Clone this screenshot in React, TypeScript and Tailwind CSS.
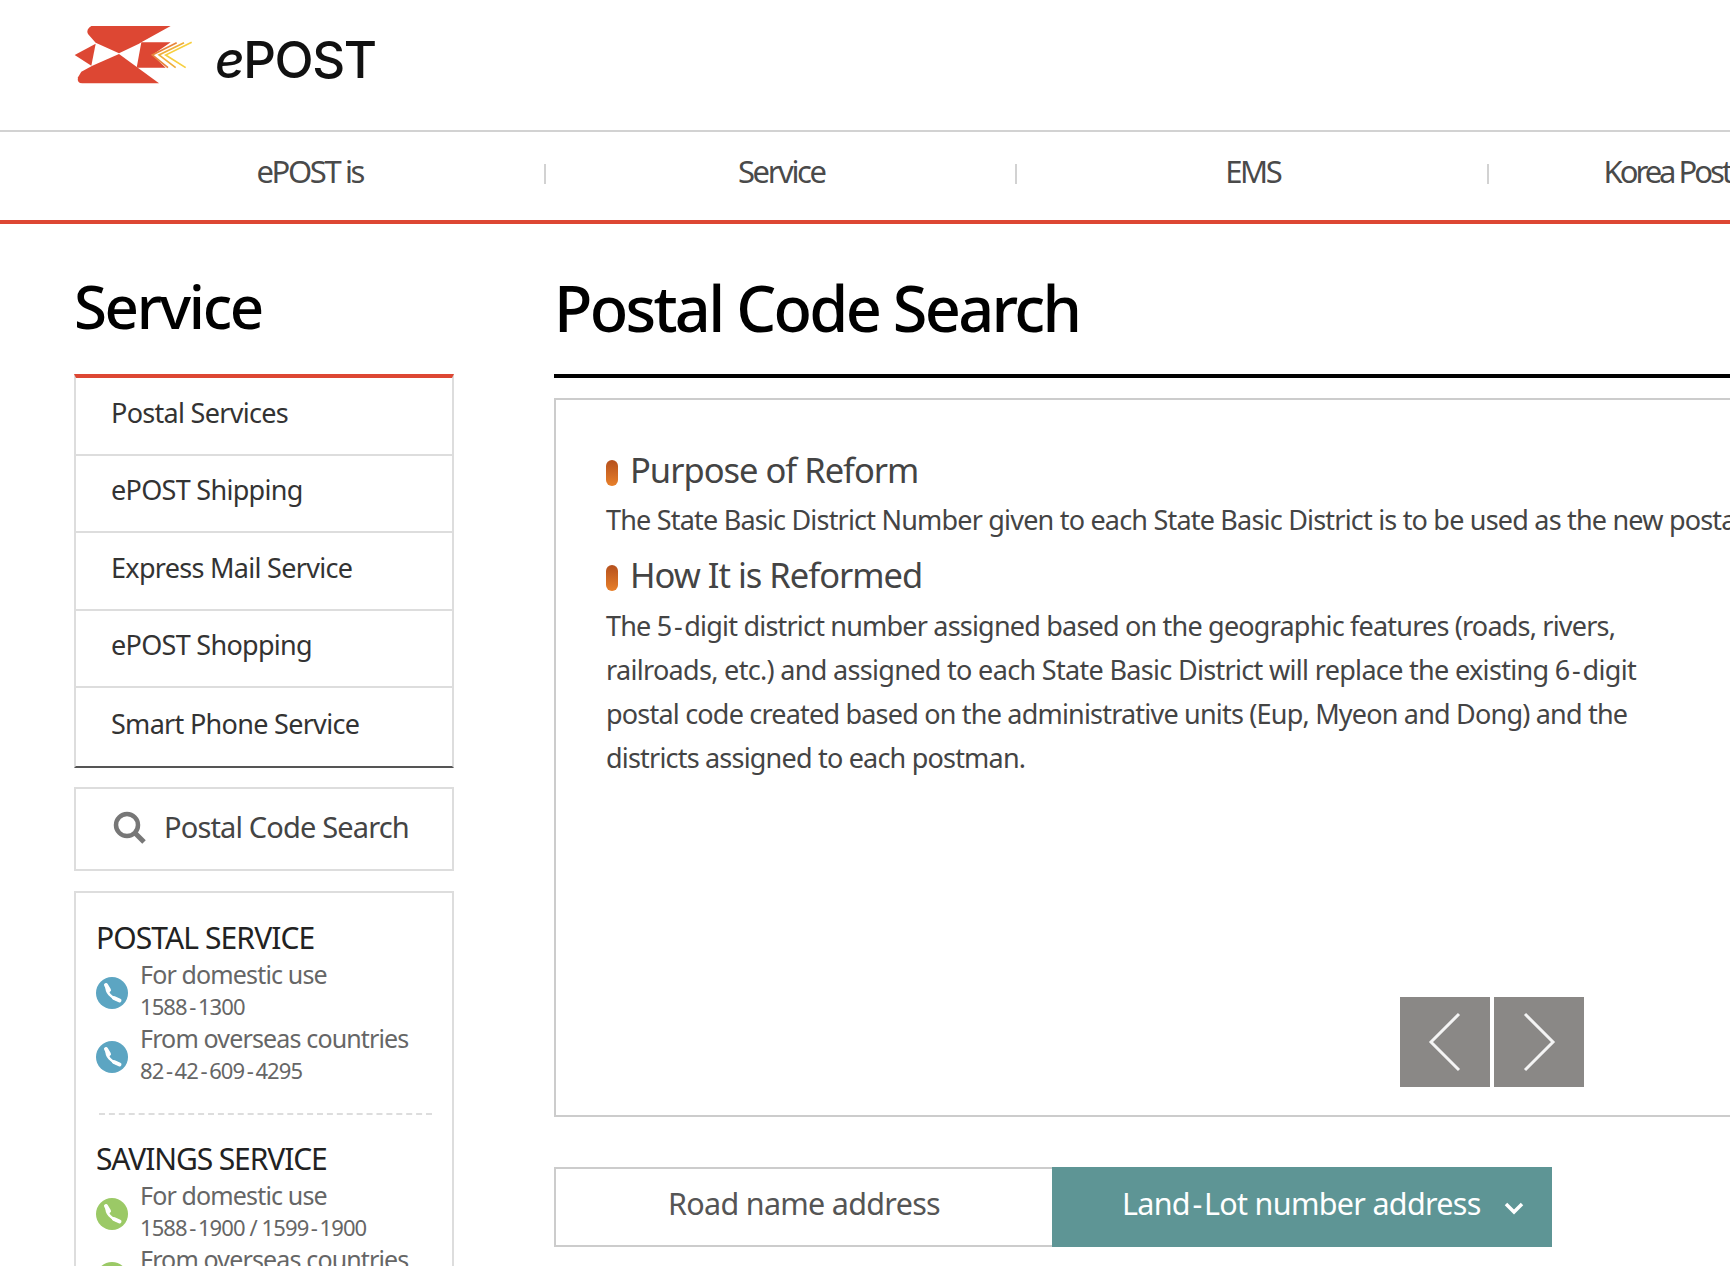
const NAV = ["ePOST is", "Service", "EMS", "Korea Post"];
const MENU = ["Postal Services", "ePOST Shipping", "Express Mail Service", "ePOST Shopping", "Smart Phone Service"];

function Logo() {
  return (
    <svg width="119" height="59" viewBox="70 75 357 177" className="mb-[9px] shrink-0">
      {/* top band, left wing, bottom band, tail */}
      <path d="M135 128L112 102Q105 88 122 78H360L272 127L265 131L205 160Z" fill="#dd4733" />
      <path d="M135 131L72 165L122 197Z" fill="#dd4733" />
      <path d="M125 197L205 162L325 250H95Q78 250 82 232L92 215Z" fill="#dd4733" />
      <path d="M272 127H360L305 165L345 203H258Z" fill="#dd4733" />
      <path d="M378 128L305 165L352 203" fill="none" stroke="#e8843a" strokeWidth="5" />
      <path d="M400 128L325 165L375 203" fill="none" stroke="#efae3a" strokeWidth="5" />
      <path d="M423 127L345 165L405 203" fill="none" stroke="#f7cf3f" strokeWidth="5" />
    </svg>
  );
}

function SearchIcon() {
  return (
    <svg width="34" height="34" viewBox="0 0 34 34" className="shrink-0">
      <circle cx="15" cy="15" r="11" fill="none" stroke="#777" strokeWidth="4.5" />
      <path d="M23 23L32 32" stroke="#777" strokeWidth="5" />
    </svg>
  );
}

function PhoneGlyph() {
  return (
    <svg width="32" height="32" viewBox="0 0 32 32" fill="none">
      <path d="M10.5 9C10 15 15 21 22 23" stroke="#fff" strokeWidth="2.5" />
      <path d="M10 8L13 13M18 21L23.5 23.5" stroke="#fff" strokeWidth="4" strokeLinecap="round" />
    </svg>
  );
}

// the hyphen in the reference's font is nearly as wide as a minus
function Hy() {
  return <span className="mx-[2.5px]">-</span>;
}

function Contact({ color, label, value }: { color: string; label: string; value: string[] }) {
  return (
    <div className="flex h-16 items-center gap-3">
      <span className={`mt-[6px] h-8 w-8 shrink-0 rounded-full ${color}`}>
        <PhoneGlyph />
      </span>
      <div className="flex flex-col whitespace-nowrap text-[#666]">
        <span className="text-[25px] leading-8 tracking-[-0.85px]">{label}</span>
        <span className="text-[22px] leading-8 tracking-[-0.9px]">
          {value.map((part, i) => (
            <span key={i}>
              {i > 0 && <Hy />}
              {part}
            </span>
          ))}
        </span>
      </div>
    </div>
  );
}

function Heading({ children, className }: { children: string; className: string }) {
  return (
    <h4 className={`flex h-11 items-center gap-3 text-[34.5px] tracking-[-1px] text-[#444] ${className}`}>
      <span className="mt-[6px] h-[26px] w-3 rounded-[6px] bg-linear-to-b from-[#b5501d] to-[#e8802a]" />
      {children}
    </h4>
  );
}

export default function App() {
  return (
    <div className="h-[1266px] w-[1730px] overflow-hidden bg-white font-['Noto_Sans',sans-serif] text-[#444]">
      <header className="flex h-[130px] items-center gap-[22px] pb-3 pl-[74px]">
        <Logo />
        <span className="font-['Inter',sans-serif] text-[51px] font-medium leading-none tracking-[-1.4px] text-[#111]">
          <i>e</i>POST
        </span>
      </header>

      <nav className="flex h-[94px] border-t-2 border-t-[#d2d2d2] pl-[74px]">
        {NAV.map((item, i) => (
          <div
            key={item}
            className={`relative flex h-[78px] w-[471.5px] shrink-0 items-center ${i < 3 ? "justify-center" : "pl-[115px]"}`}
          >
            <span className={`whitespace-nowrap text-[31px] text-[#4a4a4a] ${i < 3 ? "tracking-[-2.4px]" : "tracking-[-3px]"}`}>{item}</span>
            {i < 3 && <span className="absolute right-0 top-[32px] h-5 w-0.5 bg-[#d2d2d2]" />}
          </div>
        ))}
      </nav>
      <div className="-mt-1 h-1 bg-[#dd4733]" />

      <div className="flex gap-[100px] pl-[74px]">
        <aside className="w-[380px] shrink-0">
          <h2 className="flex h-[150px] items-center pt-[14px] text-[60px] font-medium leading-none tracking-[-2.4px] text-black">Service</h2>
          <ul className="border-x-2 border-b-2 border-t-4 border-x-[#ddd] border-b-[#555] border-t-[#dd4733]">
            {MENU.map((item, i) => (
              <li
                key={item}
                className={`flex h-[77.5px] items-center pb-1.5 pl-[35px] text-[27px] tracking-[-0.7px] text-[#333] ${i < 4 ? "border-b-2 border-[#ddd]" : ""}`}
              >
                {item}
              </li>
            ))}
          </ul>
          <div className="mt-[19px] flex h-[84px] items-center gap-[18px] border-2 border-[#ddd] pb-1 pl-9 text-[29px] tracking-[-0.85px] text-[#444]">
            <SearchIcon />
            Postal Code Search
          </div>
          <div className="mt-5 h-[500px] border-2 border-[#ddd] px-5 pt-[27px]">
            <h3 className="mb-[2px] text-[30px] leading-9 tracking-[-0.9px] text-[#222]">POSTAL SERVICE</h3>
            <Contact color="bg-[#5ca5c2]" label="For domestic use" value={["1588", "1300"]} />
            <Contact color="bg-[#5ca5c2]" label="From overseas countries" value={["82", "42", "609", "4295"]} />
            <div className="mb-[26px] ml-[3px] mt-[27px] border-t-2 border-dashed border-[#ddd]" />
            <h3 className="mb-[2px] text-[30px] leading-9 tracking-[-1.1px] text-[#222]">SAVINGS SERVICE</h3>
            <Contact color="bg-[#9bc966]" label="For domestic use" value={["1588", "1900 / 1599", "1900"]} />
            <Contact color="bg-[#9bc966]" label="From overseas countries" value={["82", "42", "609", "4295"]} />
          </div>
        </aside>

        <main className="w-[1300px] shrink-0">
          <h1 className="flex h-[150px] items-center pt-4 text-[63px] font-medium leading-none tracking-[-2.7px] text-black">Postal Code Search</h1>
          <div className="h-1 bg-black" />
          <section className="relative mt-5 h-[719px] border-2 border-[#ccc] pl-[50px] pt-[48px]">
            <Heading className="">Purpose of Reform</Heading>
            <p className="mt-[6px] whitespace-nowrap text-[27px] leading-[44px] tracking-[-0.8px]">
              The State Basic District Number given to each State Basic District is to be used as the new postal code.
            </p>
            <Heading className="mt-[11px]">How It is Reformed</Heading>
            <p className="mt-[7px] whitespace-nowrap text-[27px] leading-[44px] tracking-[-0.8px]">
              The 5<Hy />digit district number assigned based on the geographic features (roads, rivers,<br />
              <span className="tracking-[-0.68px]">
                railroads, etc.) and assigned to each State Basic District will replace the existing 6<Hy />digit
              </span>
              <br />
              postal code created based on the administrative units (Eup, Myeon and Dong) and the<br />
              districts assigned to each postman.
            </p>
            <div className="absolute left-[844px] top-[597px] flex gap-1">
              <button className="flex h-[90px] w-[90px] items-center justify-center bg-[#8a8886]">
                <svg width="36" height="60" viewBox="0 0 36 60" fill="none">
                  <path d="M32 2L4 30L32 58" stroke="#f4f4f4" strokeWidth="3" />
                </svg>
              </button>
              <button className="flex h-[90px] w-[90px] items-center justify-center bg-[#8a8886]">
                <svg width="36" height="60" viewBox="0 0 36 60" fill="none">
                  <path d="M4 2L32 30L4 58" stroke="#f4f4f4" strokeWidth="3" />
                </svg>
              </button>
            </div>
          </section>
          <div className="mt-[50px] flex h-20 w-[998px] text-[30.5px] tracking-[-0.7px]">
            <div className="flex w-[498px] items-center justify-center border-2 border-r-0 border-[#ccc] pb-1.5 text-[#555]">Road name address</div>
            <div className="flex w-[500px] items-center gap-[23px] bg-[#5e9595] pb-1.5 pl-[70px] text-white">
              <span>
                Land<Hy />Lot number address
              </span>
              <svg width="20" height="14" viewBox="0 0 20 14" fill="none" className="mt-2">
                <path d="M2 3L10 11L18 3" stroke="#fff" strokeWidth="3.5" />
              </svg>
            </div>
          </div>
        </main>
      </div>
    </div>
  );
}
